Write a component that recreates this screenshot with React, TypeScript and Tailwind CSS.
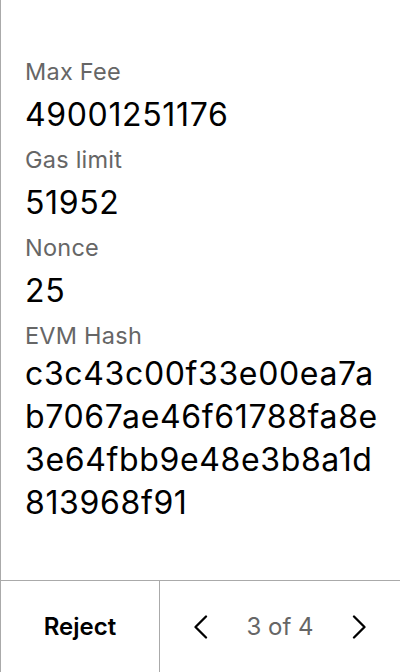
import React from "react";

function Chevron({ dir }: { dir: "left" | "right" }) {
  return (
    <svg width="16" height="24" viewBox="0 0 16 24" fill="none">
      <path
        d={dir === "left" ? "M14 1.5 L3.5 12 L14 22.5" : "M2 1.5 L12.5 12 L2 22.5"}
        stroke="#000"
        strokeWidth="2.3"
        strokeLinecap="round"
        strokeLinejoin="round"
      />
    </svg>
  );
}

function Field({ label, value, hash }: { label: string; value: string; hash?: boolean }) {
  return (
    <div className="flex flex-col">
      <div className="text-[23.5px] leading-[32px] tracking-[0.01em] text-[#666]">{label}</div>
      <div
        className={`text-[32px] leading-[43px] tracking-[0.02em] text-black break-all ${hash ? "mt-0" : "mt-[5px]"}`}
      >
        {value}
      </div>
    </div>
  );
}

export default function App() {
  return (
    <div
      className="w-[400px] h-[672px] flex flex-col bg-white border-l border-[#aaa]"
      style={{ fontFamily: "Inter, 'Noto Sans', sans-serif" }}
    >
      <div className="flex-1 flex flex-col gap-[8px] pt-[56px] pl-[24px] pr-[20px]">
        <Field label="Max Fee" value="49001251176" />
        <Field label="Gas limit" value="51952" />
        <Field label="Nonce" value="25" />
        <Field label="EVM Hash" value="c3c43c00f33e00ea7ab7067ae46f61788fa8e3e64fbb9e48e3b8a1d813968f91" hash />
      </div>
      <div className="h-[92px] grid grid-cols-[159px_1fr] border-t border-[#aaa]">
        <div className="flex items-center justify-center border-r border-[#aaa]">
          <span className="text-[24px] font-semibold text-black">Reject</span>
        </div>
        <div className="flex items-center justify-between px-[32px]">
          <Chevron dir="left" />
          <span className="text-[24px] text-[#666]">3 of 4</span>
          <Chevron dir="right" />
        </div>
      </div>
    </div>
  );
}
